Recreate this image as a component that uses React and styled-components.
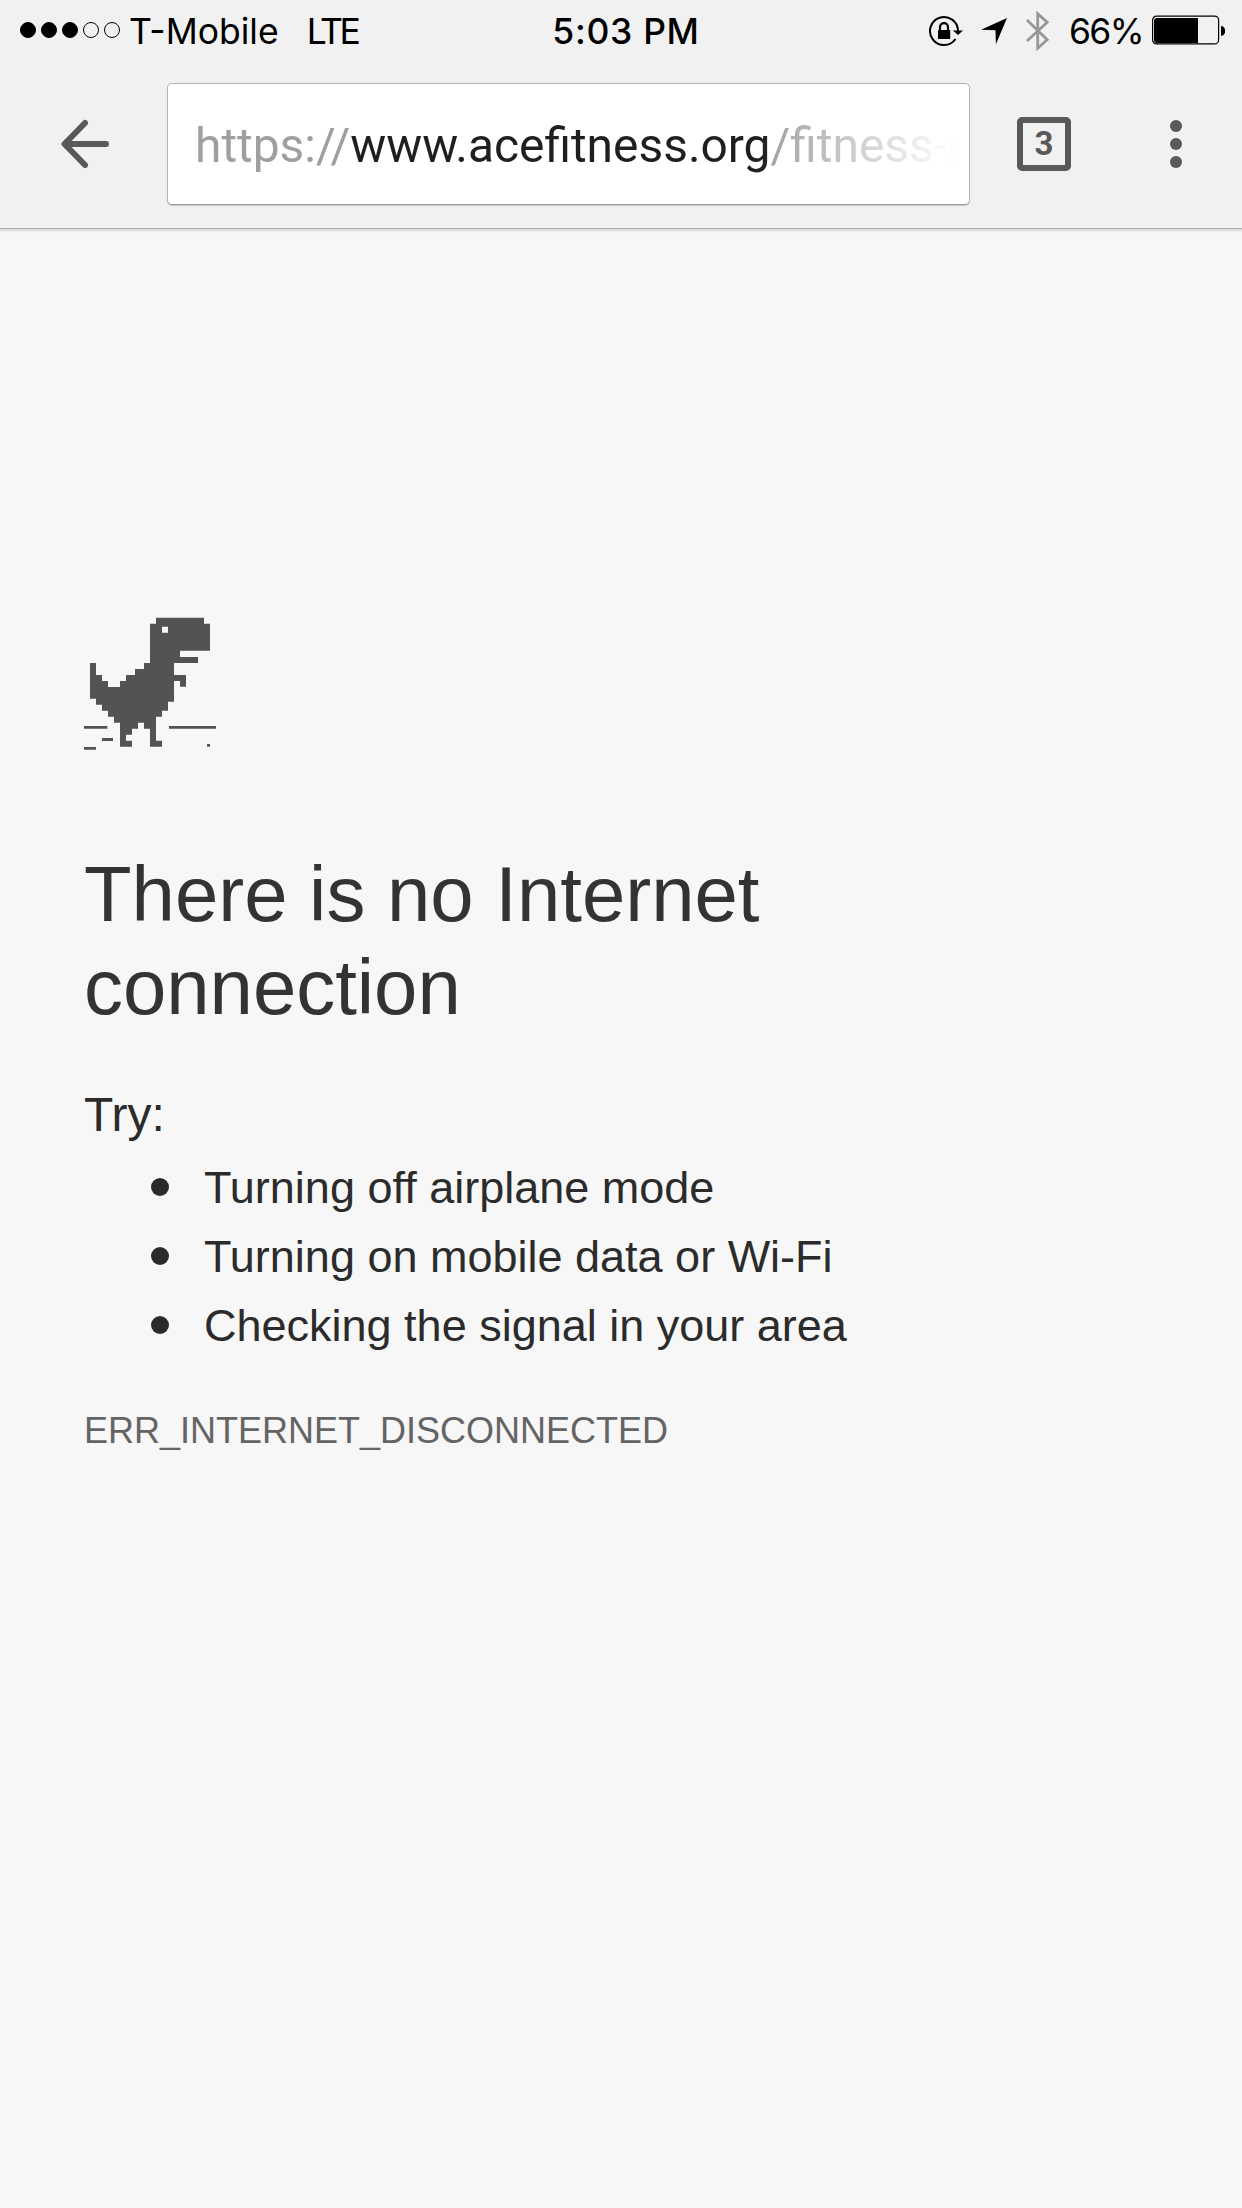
import React from "react";
import styled, { createGlobalStyle } from "styled-components";

const GlobalStyle = createGlobalStyle`
  *, *::before, *::after { box-sizing: border-box; }
  html, body { margin: 0; padding: 0; background: #f7f7f7; }
  svg { display: block; flex: none; }
`;

const Screen = styled.div`
  width: 1242px;
  height: 2208px;
  overflow: hidden;
  display: flex;
  flex-direction: column;
  background: #f7f7f7;
  font-family: "Liberation Sans", Arial, Helvetica, sans-serif;
`;

const Header = styled.header`
  height: 229px;
  flex: none;
  background: #f1f1f1;
  border-bottom: 1px solid #adadad;
  box-shadow: 0 1px 2px 1px rgba(0, 0, 0, 0.12);
`;

const StatusBar = styled.div`
  height: 60px;
  display: grid;
  grid-template-columns: 1fr auto 1fr;
  align-items: center;
  padding: 0 17px 0 20px;
  font-family: Inter, "Liberation Sans", sans-serif;
  font-size: 35.5px;
  line-height: 60px;
  color: #000;
`;

const StatusGroup = styled.div`
  display: flex;
  align-items: center;
  justify-content: ${(p) => (p.$end ? "flex-end" : "flex-start")};
`;

const Signal = styled.div`
  display: flex;
  gap: 5px;
  margin-bottom: 2px;
`;

const SignalDot = styled.span`
  width: 16px;
  height: 16px;
  border-radius: 50%;
  border: 1px solid #000;
  background: ${(p) => (p.$on ? "#000" : "transparent")};
`;

const StatusText = styled.span`
  margin-left: ${(p) => p.$gap || 0}px;
  letter-spacing: ${(p) => p.$track || 0}px;
  padding-top: 2px;
  white-space: nowrap;
`;

const Clock = styled(StatusText)`
  padding-left: 7px;
  font-weight: 500;
`;

const StatusIcon = styled.svg`
  margin-left: ${(p) => p.$gap || 0}px;
  margin-bottom: ${(p) => p.$lift || 0}px;
`;

const Toolbar = styled.div`
  display: flex;
  align-items: center;
  height: 121px;
  margin-top: 23px;
  padding: 0 60px 0 60px;
`;

const UrlBox = styled.div`
  width: 803px;
  height: 122px;
  margin-left: 57px;
  padding: 0 11px 0 27px;
  display: flex;
  align-items: center;
  background: #fff;
  border: 1px solid #b4b4b4;
  border-bottom-color: #989898;
  border-radius: 5px;
  box-shadow: 0 1px 1px rgba(0, 0, 0, 0.16);
`;

const Url = styled.div`
  flex: 1;
  overflow: hidden;
  white-space: nowrap;
  font-family: Roboto, sans-serif;
  font-size: 47.9px;
  line-height: 60px;
  padding-top: 4px;
  color: #9f9f9f;
  mask-image: linear-gradient(to right, #000 567px, transparent 759px);
`;

const Host = styled.span`
  color: #1f1f1f;
`;

const TabCount = styled.div`
  width: 54px;
  height: 54px;
  margin-left: 47px;
  display: flex;
  align-items: center;
  justify-content: center;
  border: 6px solid #595959;
  border-radius: 5px;
  font-family: Roboto, sans-serif;
  font-weight: 700;
  font-size: 33px;
  line-height: 42px;
  color: #595959;
`;

const Menu = styled.div`
  margin-left: auto;
  width: 12px;
  display: grid;
  gap: 6px;
`;

const MenuDot = styled.span`
  width: 12px;
  height: 12px;
  border-radius: 50%;
  background: #595959;
`;

const Main = styled.main`
  padding: 388px 84px 0;
`;

const Title = styled.h1`
  width: 760px;
  margin: 97px 0 0;
  font-weight: 400;
  font-size: 77.9px;
  line-height: 93px;
  color: #333;
`;

const Intro = styled.p`
  margin: 52px 0 0;
  font-size: 48px;
  line-height: 58px;
  color: #2b2b2b;
`;

const Tips = styled.ul`
  margin: 9px 0 0;
  padding: 0 0 0 67px;
  list-style: none;
  font-size: 45px;
  line-height: 69px;
  color: #2b2b2b;
`;

const Tip = styled.li`
  display: flex;
  align-items: center;
  gap: 35px;

  &::before {
    content: "";
    width: 18px;
    height: 18px;
    margin-bottom: 2px;
    border-radius: 50%;
    background: #2b2b2b;
  }
`;

const ErrorCode = styled.p`
  margin: 50px 0 0;
  font-size: 36px;
  line-height: 42px;
  color: #646464;
`;

const RotationLock = () => (
  <StatusIcon width="36" height="34" viewBox="0 0 36 34">
    <path d="M27.5 25A14 14 0 1 1 30 17" fill="none" stroke="#000" strokeWidth="2" />
    <path d="M24.900 16.500h10.200l-5.100 4.600z" fill="#000" />
    <path d="M12 17v-3.800a4 4 0 0 1 8 0V17" fill="none" stroke="#000" strokeWidth="2.2" />
    <rect x="10" y="16" width="12.2" height="9" rx="0.6" fill="#000" />
  </StatusIcon>
);

const LocationArrow = () => (
  <StatusIcon $gap={16} width="28" height="28" viewBox="0 0 28 28">
    <path d="M27 1 15.900 27.200 15.500 13.300 1 12.700z" fill="#000" />
  </StatusIcon>
);

const Bluetooth = () => (
  <StatusIcon $gap={18} $lift={1} width="24" height="42" viewBox="0 0 24 42">
    <path
      d="M1 10 21.2 29.8 11.7 38.2V3.6l9.5 8.6L1 31"
      fill="none"
      stroke="#979797"
      strokeWidth="2.8"
    />
  </StatusIcon>
);

const Battery = () => (
  <StatusIcon $gap={9} $lift={2} width="73" height="30" viewBox="0 0 73 30">
    <rect x="0.6" y="1.1" width="66" height="27.8" rx="4" fill="none" stroke="#000" strokeWidth="1.2" />
    <path d="M5 3h41v25H5a3 3 0 0 1-3-3V6a3 3 0 0 1 3-3z" fill="#000" />
    <path d="M69 11a4.2 5 0 0 1 0 10z" fill="#000" />
  </StatusIcon>
);

const BackArrow = () => (
  <svg width="50" height="50" viewBox="0 0 50 50">
    <path
      d="M46 25H5M25 4 4.500 25 25 46"
      fill="none"
      stroke="#595959"
      strokeWidth="6"
      strokeLinecap="round"
      strokeLinejoin="round"
    />
  </svg>
);

const Dino = () => (
  <svg width="133" height="134" viewBox="27 36 399 402" fill="#535353">
    <path
      fillRule="evenodd"
      d="M243 38H387V56H405V137H315V156H369V174H297V210H333V245H315V228H297V290H279V317H261V335H243V407H261V425H225V371H207V353H189V371H171V389H153V407H171V425H135V353H117V335H99V317H81V299H63V281H45V174H63V210H81V228H99V246H135V228H153V210H180V192H207V174H225V56H243ZM261 65V83H279V65Z"
    />
    <path d="M27 363h70v8H27zM282 363h141v8H282zM81 399h33v9H81zM27 426h36v8H27zM396 417h9v8h-9z" />
  </svg>
);

const TIPS = [
  "Turning off airplane mode",
  "Turning on mobile data or Wi-Fi",
  "Checking the signal in your area",
];

export default function App() {
  return (
    <>
      <GlobalStyle />
      <Screen>
        <Header>
          <StatusBar>
            <StatusGroup>
              <Signal>
                {[1, 1, 1, 0, 0].map((on, i) => (
                  <SignalDot key={i} $on={on} />
                ))}
              </Signal>
              <StatusText $gap={9}>T-Mobile</StatusText>
              <StatusText $gap={28} $track={-3.4}>LTE</StatusText>
            </StatusGroup>
            <Clock $track={0.7}>5:03 PM</Clock>
            <StatusGroup $end>
              <RotationLock />
              <LocationArrow />
              <Bluetooth />
              <StatusText $gap={19} $track={-1.6}>66%</StatusText>
              <Battery />
            </StatusGroup>
          </StatusBar>
          <Toolbar>
            <BackArrow />
            <UrlBox>
              <Url>
                https://<Host>www.acefitness.org</Host>/fitness-r
              </Url>
            </UrlBox>
            <TabCount>3</TabCount>
            <Menu>
              <MenuDot />
              <MenuDot />
              <MenuDot />
            </Menu>
          </Toolbar>
        </Header>
        <Main>
          <Dino />
          <Title>There is no Internet connection</Title>
          <Intro>Try:</Intro>
          <Tips>
            {TIPS.map((tip) => (
              <Tip key={tip}>{tip}</Tip>
            ))}
          </Tips>
          <ErrorCode>ERR_INTERNET_DISCONNECTED</ErrorCode>
        </Main>
      </Screen>
    </>
  );
}
